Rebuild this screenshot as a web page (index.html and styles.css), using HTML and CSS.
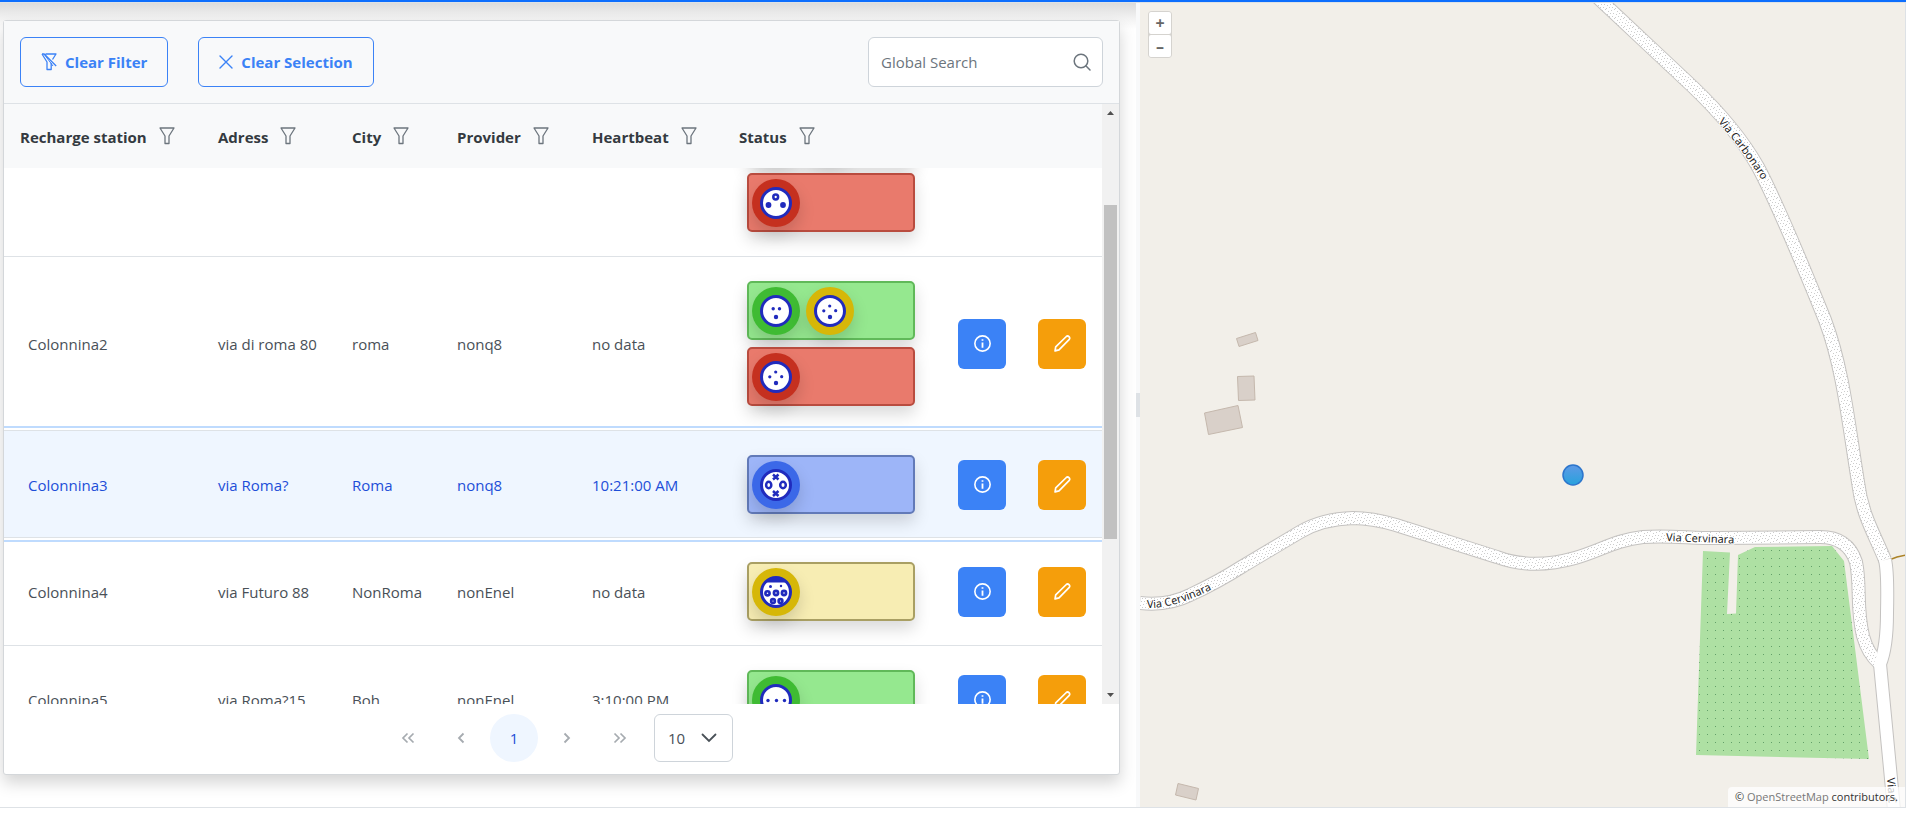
FILE: index.html
```html
<!DOCTYPE html>
<html lang="en">
<head>
<meta charset="utf-8">
<title>Recharge stations</title>
<link rel="stylesheet" href="styles.css">
</head>
<body>
<svg class="defs" aria-hidden="true">
  <symbol id="i-filter" viewBox="0 0 16 18"><path d="M1 1h14l-5 8v7.500H6V9z" fill="none" stroke="currentColor" stroke-width="1.300" stroke-linejoin="round"/></symbol>
  <symbol id="i-filter-slash" viewBox="0 0 16 18"><path d="M4.500 1H15l-3.500 5.500M1 1l5 8v7.500h4.200V10M1 1h2.200l12 12" fill="none" stroke="currentColor" stroke-width="1.300" stroke-linejoin="round"/><path d="M3 1l9 12" fill="none" stroke="currentColor" stroke-width="1"/></symbol>
  <symbol id="i-times" viewBox="0 0 14 14"><path d="M1 1l12 12M13 1L1 13" fill="none" stroke="currentColor" stroke-width="1.400" stroke-linecap="round"/></symbol>
  <symbol id="i-search" viewBox="0 0 18 18"><circle cx="8" cy="8" r="6.800" fill="none" stroke="currentColor" stroke-width="1.500"/><path d="M12.800 12.800L17 17" stroke="currentColor" stroke-width="1.500" stroke-linecap="round"/></symbol>
  <symbol id="i-info" viewBox="0 0 16 16"><circle cx="8" cy="8" r="7.200" fill="none" stroke="currentColor" stroke-width="1.500"/><path d="M8 7v5M8 4v1.500" stroke="currentColor" stroke-width="1.700"/></symbol>
  <symbol id="i-pencil" viewBox="0 0 16 16"><path d="M1 15l.6-3.800L11.600 1.400q1.300-1 2.500.2t.3 2.500L4.700 14z" fill="none" stroke="currentColor" stroke-width="1.600" stroke-linejoin="round"/></symbol>
  <symbol id="i-left" viewBox="0 0 8 12"><path d="M6.500 1.500L2 6l4.500 4.500" fill="none" stroke="currentColor" stroke-width="1.800"/></symbol>
  <symbol id="i-dleft" viewBox="0 0 14 12"><path d="M6.500 1.500L2 6l4.500 4.500M12.500 1.500L8 6l4.500 4.500" fill="none" stroke="currentColor" stroke-width="1.700"/></symbol>
  <symbol id="i-down" viewBox="0 0 16 10"><path d="M1.500 1.500L8 8l6.500-6.500" fill="none" stroke="currentColor" stroke-width="1.800" stroke-linecap="round"/></symbol>
  <symbol id="p-base" viewBox="0 0 32 32"><circle cx="16" cy="16" r="14.500" fill="#fff" stroke="#202bbd" stroke-width="3"/></symbol>
  <symbol id="p-domestic" viewBox="0 0 32 32"><use href="#p-base"/><g fill="#202bbd"><circle cx="8.500" cy="18" r="2.900"/><circle cx="23" cy="18" r="2.900"/></g><circle cx="15.700" cy="10" r="2.400" fill="#fff" stroke="#202bbd" stroke-width="2.500"/></symbol>
  <symbol id="p-three" viewBox="0 0 32 32"><use href="#p-base"/><g fill="#202bbd"><circle cx="13.200" cy="13.800" r="1.700"/><circle cx="19.500" cy="13.700" r="1.700"/><circle cx="16" cy="22" r="2.200"/></g></symbol>
  <symbol id="p-four" viewBox="0 0 32 32"><use href="#p-base"/><g fill="#202bbd"><circle cx="15.700" cy="11" r="1.600"/><circle cx="9.800" cy="15.800" r="1.600"/><circle cx="21.700" cy="15.700" r="1.600"/><circle cx="16" cy="22" r="2.200"/></g></symbol>
  <symbol id="p-cross" viewBox="0 0 32 32"><use href="#p-base"/><g fill="none" stroke="#202bbd" stroke-width="2.500"><ellipse cx="8.700" cy="16" rx="2.600" ry="3.200"/><ellipse cx="23" cy="16" rx="2.800" ry="3.200"/><path d="M13 5.500l5.500 5M18.500 5.500l-5.500 5M13 22l5.500 5M18.500 22l-5.500 5"/></g></symbol>
  <symbol id="p-type2" viewBox="0 0 32 32"><use href="#p-base"/><path d="M4 6Q16-4 28 6v.5H4z" fill="#202bbd"/><g fill="#202bbd"><circle cx="10.500" cy="10.500" r="1.500"/><circle cx="21" cy="10" r="1.200"/></g><g fill="#fff" stroke="#202bbd" stroke-width="2.600"><circle cx="7.500" cy="17.300" r="2.100"/><circle cx="16" cy="17" r="2.100"/><circle cx="24" cy="17" r="2.100"/><circle cx="13" cy="25" r="1.900"/><circle cx="20.500" cy="25" r="1.900"/></g></symbol>
  <symbol id="p-line" viewBox="0 0 32 32"><use href="#p-base"/><g fill="#202bbd"><circle cx="8" cy="16.500" r="1.700"/><circle cx="16.500" cy="16.500" r="1.700"/><circle cx="24.500" cy="16.500" r="1.700"/></g></symbol>
</svg>

<header class="topbar"></header>
<main class="splitter">
  <section class="panel">
    <div class="card">
      <div class="toolbar">
        <button class="outlined"><svg class="ic16"><use href="#i-filter-slash"/></svg>Clear Filter</button>
        <button class="outlined"><svg class="ic14"><use href="#i-times"/></svg>Clear Selection</button>
        <label class="search"><input type="text" placeholder="Global Search" aria-label="Global Search"><svg class="ic18"><use href="#i-search"/></svg></label>
      </div>
      <div class="viewport">
        <div class="scroller" id="scroller">
          <table>
            <colgroup><col class="c-name"><col class="c-addr"><col class="c-city"><col class="c-prov"><col class="c-beat"><col class="c-stat"><col class="c-act"><col class="c-act"></colgroup>
            <thead>
              <tr>
                <th><span>Recharge station<button class="filter" aria-label="Filter"><svg><use href="#i-filter"/></svg></button></span></th>
                <th><span>Adress<button class="filter" aria-label="Filter"><svg><use href="#i-filter"/></svg></button></span></th>
                <th><span>City<button class="filter" aria-label="Filter"><svg><use href="#i-filter"/></svg></button></span></th>
                <th><span>Provider<button class="filter" aria-label="Filter"><svg><use href="#i-filter"/></svg></button></span></th>
                <th><span>Heartbeat<button class="filter" aria-label="Filter"><svg><use href="#i-filter"/></svg></button></span></th>
                <th><span>Status<button class="filter" aria-label="Filter"><svg><use href="#i-filter"/></svg></button></span></th>
                <th></th><th></th>
              </tr>
            </thead>
            <tbody>
              <tr>
                <td></td><td></td><td></td><td></td><td></td>
                <td><div class="stack">
                  <div class="slot green"><i class="plug green"><svg><use href="#p-three"/></svg></i></div>
                  <div class="slot green"><i class="plug green"><svg><use href="#p-three"/></svg></i><i class="plug yellow"><svg><use href="#p-four"/></svg></i></div>
                  <div class="slot red"><i class="plug red"><svg><use href="#p-domestic"/></svg></i></div>
                </div></td>
                <td></td><td></td>
              </tr>
              <tr class="before-selected">
                <td>Colonnina2</td><td>via di roma 80</td><td>roma</td><td>nonq8</td><td>no data</td>
                <td><div class="stack">
                  <div class="slot green"><i class="plug green"><svg><use href="#p-three"/></svg></i><i class="plug yellow"><svg><use href="#p-four"/></svg></i></div>
                  <div class="slot red"><i class="plug red"><svg><use href="#p-four"/></svg></i></div>
                </div></td>
                <td><button class="act info" aria-label="Info"><svg><use href="#i-info"/></svg></button></td>
                <td><button class="act edit" aria-label="Edit"><svg><use href="#i-pencil"/></svg></button></td>
              </tr>
              <tr class="selected">
                <td>Colonnina3</td><td>via Roma?</td><td>Roma</td><td>nonq8</td><td>10:21:00 AM</td>
                <td><div class="stack"><div class="slot blue"><i class="plug blue"><svg><use href="#p-cross"/></svg></i></div></div></td>
                <td><button class="act info" aria-label="Info"><svg><use href="#i-info"/></svg></button></td>
                <td><button class="act edit" aria-label="Edit"><svg><use href="#i-pencil"/></svg></button></td>
              </tr>
              <tr>
                <td>Colonnina4</td><td>via Futuro 88</td><td>NonRoma</td><td>nonEnel</td><td>no data</td>
                <td><div class="stack"><div class="slot yellow"><i class="plug yellow"><svg><use href="#p-type2"/></svg></i></div></div></td>
                <td><button class="act info" aria-label="Info"><svg><use href="#i-info"/></svg></button></td>
                <td><button class="act edit" aria-label="Edit"><svg><use href="#i-pencil"/></svg></button></td>
              </tr>
              <tr>
                <td>Colonnina5</td><td>via Roma?15</td><td>Boh</td><td>nonEnel</td><td>3:10:00 PM</td>
                <td><div class="stack"><div class="slot green"><i class="plug green"><svg><use href="#p-line"/></svg></i></div></div></td>
                <td><button class="act info" aria-label="Info"><svg><use href="#i-info"/></svg></button></td>
                <td><button class="act edit" aria-label="Edit"><svg><use href="#i-pencil"/></svg></button></td>
              </tr>
            </tbody>
          </table>
        </div>
        <div class="scrollbar" aria-hidden="true">
          <svg class="arrow" viewBox="0 0 17 17"><path d="M5 11h7L8.500 7z" fill="#505050"/></svg>
          <div class="track"><div class="thumb"></div></div>
          <svg class="arrow" viewBox="0 0 17 17"><path d="M5 6h7l-3.500 4z" fill="#505050"/></svg>
        </div>
      </div>
      <nav class="paginator">
        <button class="page" disabled aria-label="First page"><svg class="dbl"><use href="#i-dleft"/></svg></button>
        <button class="page" disabled aria-label="Previous page"><svg class="sgl"><use href="#i-left"/></svg></button>
        <button class="page current">1</button>
        <button class="page" disabled aria-label="Next page"><svg class="sgl flip"><use href="#i-left"/></svg></button>
        <button class="page" disabled aria-label="Last page"><svg class="dbl flip"><use href="#i-dleft"/></svg></button>
        <label class="rows"><select aria-label="Rows per page"><option>10</option></select><svg><use href="#i-down"/></svg></label>
      </nav>
    </div>
  </section>
  <div class="gutter"><div class="handle"></div></div>
  <section class="map">
    <svg class="tiles" viewBox="1140 3 765 804" preserveAspectRatio="xMinYMin slice" role="img" aria-label="Map">
      <defs>
        <pattern id="grain" width="9" height="9" patternUnits="userSpaceOnUse">
          <rect width="9" height="9" fill="#fff"/>
          <path d="M0 1h1v1h-1zM3 0h1v1h-1zM6 2h1v1h-1zM2 4h1v1h-1zM5 5h1v1h-1zM8 4h1v1h-1zM1 7h1v1h-1zM4 8h1v1h-1zM7 7h1v1h-1z" fill="#ccc"/>
        </pattern>
        <pattern id="orchard" x="1559" y="509" width="8" height="8" patternUnits="userSpaceOnUse">
          <rect width="8" height="8" fill="#aee0a3"/><rect x="4" y="1" width="1" height="1" fill="#63a069"/>
        </pattern>
        <path id="r-west" d="M1140 603Q1168 606 1190 595Q1218 582 1243 566L1300 532Q1322 519 1353 518Q1372 518 1396 525L1497 557Q1532 570 1575 558C1600 551 1615 540 1643 537C1665 535 1690 538 1715 538L1820 537Q1848 537 1856 562C1861 585 1856 608 1863 636Q1868 654 1879 663"/>
        <path id="r-north" d="M1597 -3L1693 87Q1736 128 1758 167C1778 204 1808 278 1825 320C1843 368 1848 420 1858 482C1862 515 1874 533 1885 560"/>
        <path id="r-east" d="M1885 560Q1888 572 1887 613Q1887 647 1880 664L1894 810"/>
        <path id="t-west" d="M1147 608Q1182 609 1240 574"/>
        <path id="t-mid" d="M1666 541L1750 544"/>
        <path id="t-north" d="M1718 122Q1742 149 1770 192"/>
        <path id="t-east" d="M1887 778L1892 850"/>
      </defs>
      <rect x="1140" y="3" width="1600" height="1600" fill="#f2efe9"/>
      <g fill="#d9d0c9" stroke="#c5b8ad">
        <path d="M1236.500 338.500l19-6 2.500 8-19 6z"/>
        <path d="M1237.500 376.500l16.500-.500 1 24-16.500.500z"/>
        <path d="M1204.500 413l33.500-7.500 4.500 22-34 7z"/>
        <path d="M1178 783.500l20.500 5-2.500 11.500-20.500-5z"/>
      </g>
      <path d="M1703 551l27 1.500-3 61.500 9-.5 2-58.500 17-8 77-1 12 15 25 198-173-4z" fill="url(#orchard)"/>
      <path d="M1889 560l8-3 9-2" fill="none" stroke="#ac8327" stroke-width="1.500"/>
      <g fill="none" stroke="#c4c2c0" stroke-width="14"><use href="#r-west"/><use href="#r-north"/><use href="#r-east"/></g>
      <g fill="none" stroke="url(#grain)" stroke-width="12"><use href="#r-west"/><use href="#r-north"/></g>
      <g fill="none" stroke="#fff" stroke-width="12"><use href="#r-east"/></g>
      <g class="street">
        <text><textPath href="#t-west">Via Cervinara</textPath></text>
        <text><textPath href="#t-mid">Via Cervinara</textPath></text>
        <text><textPath href="#t-north">Via Carbonaro</textPath></text>
        <text><textPath href="#t-east">Via C</textPath></text>
      </g>
      <linearGradient id="pin" x2="0" y2="1"><stop stop-color="#5f99e6"/><stop offset="1" stop-color="#27a2dc"/></linearGradient>
      <circle cx="1573" cy="475" r="10" fill="url(#pin)" stroke="#2c75cc" stroke-width="1.500"/>
    </svg>
    <div class="zoom"><button aria-label="Zoom in">+</button><button aria-label="Zoom out">–</button></div>
    <div class="credit">© <a href="#">OpenStreetMap</a> contributors.</div>
  </section>
</main>
<script src="main.js"></script>
</body>
</html>
```
FILE: styles.css
```css
* { box-sizing: border-box; }
body { margin: 0; background: #fff; color: #495057; font: 15px/24px "Open Sans", "Noto Sans", sans-serif; }
button, input, select { font: inherit; }
button { cursor: pointer; }
.defs { position: absolute; width: 0; height: 0; }

.topbar { height: 2px; background: #0d6efd; }
.splitter { display: grid; grid-template-columns: minmax(0, 1136fr) 4px minmax(0, 765fr); border: 1px solid #dee2e6; border-left: 0; }
.panel { padding: 17px 16px 32px 3px; overflow: hidden; background: linear-gradient(#dcdcdc, #f3f3f3 16px, #fff 26px); }
.card { position: relative; border: 1px solid #d4d7da; border-radius: 3px; background: #fff; box-shadow: 0 8px 16px rgba(0, 0, 0, .17); }

.toolbar { display: flex; align-items: center; gap: 30px; padding: 16px; background: #f8f9fa; border-bottom: 1px solid #dee2e6; }
.outlined { display: flex; align-items: center; gap: 8px; height: 50px; padding: 0 20px; border: 1px solid #3b82f6; border-radius: 6px; background: transparent; color: #3b82f6; font-weight: 700; }
.ic14 { width: 14px; height: 14px; }
.ic16 { width: 16px; height: 18px; }
.ic18 { width: 18px; height: 18px; }
.search { display: flex; align-items: center; width: 235px; height: 50px; margin-left: auto; padding: 0 11px 0 12px; border: 1px solid #ced4da; border-radius: 6px; background: #fff; color: #6c757d; }
.search input { flex: 1; min-width: 0; padding: 0; border: 0; outline: 0; background: none; }
.search input::placeholder { color: #6c757d; opacity: 1; }

.viewport { display: flex; height: 600px; }
.scroller { flex: 1; min-width: 0; overflow: auto; scrollbar-width: none; }
table { width: 100%; table-layout: fixed; border-collapse: separate; border-spacing: 0; }
.c-name { width: 198px; }
.c-addr { width: 134px; }
.c-city { width: 105px; }
.c-prov { width: 135px; }
.c-beat { width: 147px; }
.c-stat { width: 219px; }
.c-act { width: 80px; }
th { position: sticky; top: 0; z-index: 1; height: 64px; padding: 2px 0 0 16px; background: #f8f9fa; color: #343a40; text-align: left; font-weight: 700; white-space: nowrap; }
th span { display: flex; align-items: center; gap: 12px; }
.filter { display: flex; padding: 0 0 3px; border: 0; background: none; color: #6c757d; }
.filter svg { width: 16px; height: 18px; }
td { padding: 24px 0 24px 16px; border-bottom: 1px solid #dee2e6; white-space: nowrap; }
td:first-child { padding-left: 24px; }
.before-selected td { border-bottom: 0; }
.selected { background: #eff6ff; color: #1d4ed8; outline: 2px solid #bfdbfe; outline-offset: 2px; }
.selected td { padding-bottom: 23px; border-top: 1px solid #dee2e6; }

.stack { display: grid; gap: 7px; padding-left: 8px; }
.slot { display: flex; align-items: center; gap: 6px; width: 168px; height: 59px; padding: 3px; border: 2px solid; border-radius: 5px; box-shadow: 0 8px 16px rgba(0, 0, 0, .15); }
.slot.red { background: #e97a6c; border-color: #b94c3f; }
.slot.green { background: #95e88f; border-color: #60b959; }
.slot.blue { background: #9db5f8; border-color: #627ab8; }
.slot.yellow { background: #f7edb3; border-color: #a99f63; }
.plug { display: flex; padding: 8px; border-radius: 50%; box-shadow: 0 8px 16px rgba(0, 0, 0, .15); }
.plug svg { width: 32px; height: 32px; }
.plug.red { background: #c5301f; }
.plug.green { background: #3fbb33; }
.plug.blue { background: #3b68e8; }
.plug.yellow { background: #d6b708; }

.act { display: flex; align-items: center; justify-content: center; width: 48px; height: 50px; padding: 0; border: 0; border-radius: 6px; color: #fff; }
.act svg { width: 17px; height: 17px; }
.act.info { background: #3b82f6; }
.act.edit { background: #f59e0b; }

.scrollbar { display: flex; flex-direction: column; width: 17px; background: #f1f1f1; }
.arrow { width: 17px; height: 17px; }
.track { flex: 1; padding: 84px 2px 0; }
.thumb { height: 334px; background: #c1c1c1; }

.paginator { display: flex; align-items: center; justify-content: center; gap: 5px; padding: 10px 6px 12px 0; }
.page { display: flex; align-items: center; justify-content: center; width: 48px; height: 48px; padding: 0; border: 0; border-radius: 50%; background: none; color: #a6abb0; }
.page.current { background: #eff6ff; color: #1d4ed8; }
.sgl { width: 8px; height: 12px; }
.dbl { width: 14px; height: 12px; }
.flip { transform: scaleX(-1); }
.rows { display: flex; align-items: center; position: relative; margin-left: 5px; color: #495057; }
.rows select { width: 79px; height: 48px; padding: 0 13px; border: 1px solid #ced4da; border-radius: 6px; background: #fff; color: inherit; appearance: none; }
.rows svg { position: absolute; right: 16px; width: 16px; height: 10px; pointer-events: none; }

.gutter { display: flex; align-items: center; background: #f8f9fa; }
.handle { width: 4px; height: 24px; background: #dee2e6; }

.map { position: relative; overflow: hidden; background: #f2efe9; }
.tiles { position: absolute; inset: 0; width: 100%; height: 100%; }
.street { font: 11px "Noto Sans", sans-serif; fill: #222; stroke: #fff; stroke-width: 2px; paint-order: stroke; }
.zoom { position: absolute; top: 8px; left: 8px; display: grid; gap: 1px; padding: 1px; border-radius: 4px; background: #d5d3cf; }
.zoom button { width: 22px; height: 22px; padding: 0; border: 0; border-radius: 2px; background: #fff; color: #666; font-size: 16px; line-height: 20px; font-weight: 700; }
.credit { position: absolute; right: 0; bottom: 0; padding: 0 7px; border-radius: 4px 0 0; background: rgba(255, 255, 255, .75); color: #333; font-size: 11px; line-height: 20px; }
.credit a { color: #777; text-decoration: none; }
```
FILE: main.js
```js
document.getElementById('scroller').scrollTop = 151;
```
